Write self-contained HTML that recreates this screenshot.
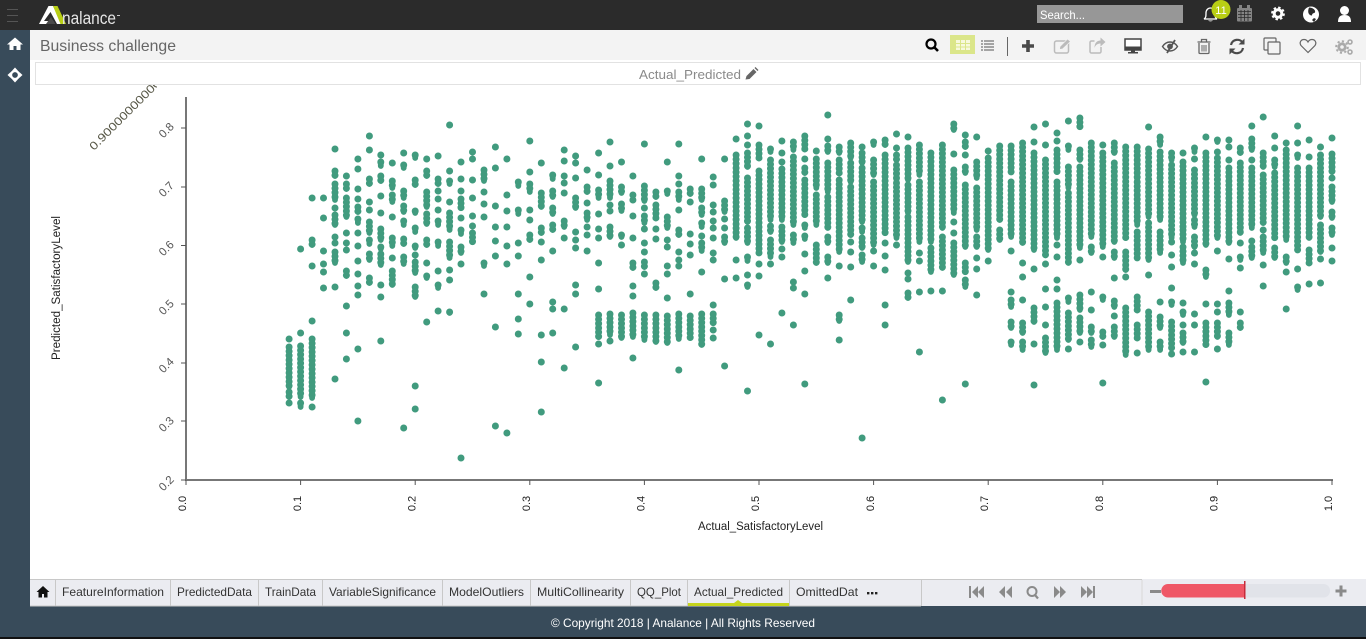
<!DOCTYPE html>
<html><head><meta charset="utf-8"><title>Analance</title>
<style>html,body{margin:0;padding:0;background:#fff;overflow:hidden}svg{display:block}text{font-family:"Liberation Sans",sans-serif}</style></head>
<body>
<svg width="1366" height="639" viewBox="0 0 1366 639" xmlns="http://www.w3.org/2000/svg">
<defs><clipPath id="c9"><rect x="60" y="85" width="97" height="90"/></clipPath>
<path id="p" d="
M289.1 339h.01M289.1 347V387M289.1 392V397M289.1 403h.01
M300.6 249h.01M300.6 333h.01M300.6 346V397M300.6 403V407
M312.1 198h.01M312.1 240V245M312.1 266h.01M312.1 321h.01M312.1 339V398M312.1 407h.01
M323.5 198h.01M323.5 218h.01M323.5 251h.01M323.5 264h.01M323.5 272h.01M323.5 288h.01
M335 149h.01M335 171V176M335 184V200M335 208h.01M335 215V225M335 237h.01M335 243h.01M335 252V263M335 287h.01M335 379h.01
M346.4 176h.01M346.4 184V189M346.4 198V217M346.4 233h.01M346.4 243h.01M346.4 250h.01M346.4 271V276M346.4 306h.01M346.4 333h.01M346.4 359h.01
M357.9 159h.01M357.9 169h.01M357.9 189h.01M357.9 199h.01M357.9 207V212M357.9 219V223M357.9 233h.01M357.9 246h.01M357.9 261h.01M357.9 274h.01M357.9 286h.01M357.9 295h.01M357.9 349h.01M357.9 421h.01
M369.4 136h.01M369.4 150h.01M369.4 179V184M369.4 202h.01M369.4 210h.01M369.4 222V233M369.4 240V244M369.4 254V260M369.4 278V283
M380.8 155h.01M380.8 162V166M380.8 176V181M380.8 196h.01M380.8 213h.01M380.8 229V240M380.8 247V249M380.8 254V265M380.8 285h.01M380.8 297h.01M380.8 341h.01
M392.3 163h.01M392.3 181V188M392.3 195V202M392.3 217h.01M392.3 238V246M392.3 258h.01M392.3 271V285
M403.7 153h.01M403.7 165V168M403.7 191V198M403.7 206V212M403.7 221V225M403.7 239V244M403.7 257V264M403.7 428h.01
M415.2 155V158M415.2 180V185M415.2 211V213M415.2 228V232M415.2 246V248M415.2 255h.01M415.2 262V273M415.2 287V297M415.2 386h.01M415.2 409h.01
M426.7 159h.01M426.7 171V176M426.7 192V207M426.7 214V224M426.7 240V245M426.7 263h.01M426.7 276V278M426.7 322h.01
M438.1 156h.01M438.1 179V184M438.1 191h.01M438.1 199h.01M438.1 210h.01M438.1 221V225M438.1 242V246M438.1 271h.01M438.1 285V288M438.1 311h.01
M449.6 125h.01M449.6 171h.01M449.6 181V184M449.6 202h.01M449.6 213V230M449.6 242V258M449.6 270h.01M449.6 280h.01M449.6 312V313
M461 162h.01M461 179h.01M461 191h.01M461 199V208M461 218h.01M461 230V234M461 247V253M461 264h.01M461 458h.01
M472.5 152h.01M472.5 159h.01M472.5 180h.01M472.5 198h.01M472.5 216h.01M472.5 226h.01M472.5 233V242
M484 170V181M484 192h.01M484 204h.01M484 217h.01M484 263V266M484 294h.01
M495.4 147h.01M495.4 168h.01M495.4 206h.01M495.4 227h.01M495.4 241h.01M495.4 256h.01M495.4 327h.01M495.4 426h.01
M506.9 159h.01M506.9 195h.01M506.9 211h.01M506.9 227h.01M506.9 246h.01M506.9 264h.01M506.9 433h.01
M518.3 182V186M518.3 210V214M518.3 243h.01M518.3 256h.01M518.3 294h.01M518.3 319h.01M518.3 334h.01
M529.8 141h.01M529.8 172h.01M529.8 184V192M529.8 210h.01M529.8 220h.01M529.8 235V240M529.8 277h.01M529.8 304h.01
M541.3 163h.01M541.3 193V207M541.3 228V233M541.3 242h.01M541.3 260h.01M541.3 335h.01M541.3 362h.01M541.3 412h.01
M552.7 175V179M552.7 191V197M552.7 208V214M552.7 225V230M552.7 251h.01M552.7 302h.01M552.7 309h.01M552.7 333h.01
M564.2 150h.01M564.2 161h.01M564.2 176h.01M564.2 183h.01M564.2 193h.01M564.2 221V227M564.2 238h.01M564.2 309h.01M564.2 368h.01
M575.6 156h.01M575.6 163h.01M575.6 178h.01M575.6 198V208M575.6 232h.01M575.6 240h.01M575.6 248h.01M575.6 285h.01M575.6 294h.01M575.6 347h.01
M587.1 170h.01M587.1 187V192M587.1 203h.01M587.1 213V220M587.1 227h.01M587.1 235h.01M587.1 251h.01
M598.6 153h.01M598.6 175h.01M598.6 190V198M598.6 214h.01M598.6 229h.01M598.6 238h.01M598.6 263h.01M598.6 289h.01M598.6 315V337M598.6 344h.01M598.6 383h.01
M610 142h.01M610 166h.01M610 181V198M610 205h.01M610 211h.01M610 227V237M610 314V335M610 341h.01
M621.5 162h.01M621.5 187V193M621.5 204V211M621.5 235V237M621.5 245h.01M621.5 315V338
M632.9 176h.01M632.9 195h.01M632.9 200h.01M632.9 216h.01M632.9 238h.01M632.9 263V268M632.9 286h.01M632.9 296h.01M632.9 313V337M632.9 358h.01
M644.4 144h.01M644.4 186V201M644.4 208h.01M644.4 216V223M644.4 229h.01M644.4 243h.01M644.4 252h.01M644.4 262V267M644.4 274h.01M644.4 315V340
M655.9 192V197M655.9 205V218M655.9 229h.01M655.9 239h.01M655.9 283V288M655.9 315V342
M667.3 162h.01M667.3 191V194M667.3 217V228M667.3 240h.01M667.3 247h.01M667.3 266h.01M667.3 274h.01M667.3 298h.01M667.3 316V343
M678.8 144h.01M678.8 176h.01M678.8 184h.01M678.8 192V200M678.8 210h.01M678.8 230V235M678.8 252h.01M678.8 260h.01M678.8 266h.01M678.8 314V339M678.8 370h.01
M690.2 189V194M690.2 202h.01M690.2 234h.01M690.2 244h.01M690.2 255h.01M690.2 294h.01M690.2 316V338
M701.7 159h.01M701.7 189V200M701.7 208V215M701.7 223V227M701.7 236h.01M701.7 243V251M701.7 272h.01M701.7 314V345
M713.2 177h.01M713.2 185h.01M713.2 205h.01M713.2 212h.01M713.2 221h.01M713.2 228h.01M713.2 238h.01M713.2 253h.01M713.2 260h.01M713.2 305h.01M713.2 314V323M713.2 330h.01M713.2 338h.01
M724.6 159h.01M724.6 201V212M724.6 219h.01M724.6 228h.01M724.6 237V243M724.6 279h.01M724.6 366h.01
M736.1 139h.01M736.1 155V238M736.1 260h.01M736.1 278h.01
M747.5 124h.01M747.5 136h.01M747.5 145h.01M747.5 153V167M747.5 178V222M747.5 228V243M747.5 257V261M747.5 275h.01M747.5 285V287M747.5 391h.01
M759 126h.01M759 145V158M759 171V253M759 264h.01M759 276h.01M759 335h.01
M770.5 149V152M770.5 160V220M770.5 226V232M770.5 240V257M770.5 264h.01M770.5 344h.01
M781.9 141h.01M781.9 153h.01M781.9 162h.01M781.9 169V220M781.9 227V242M781.9 249h.01M781.9 257h.01M781.9 313h.01
M793.4 142V150M793.4 157V225M793.4 235V243M793.4 282h.01M793.4 288h.01M793.4 325h.01
M804.8 136V149M804.8 159h.01M804.8 168V173M804.8 180V215M804.8 225V228M804.8 236V239M804.8 254h.01M804.8 271h.01M804.8 294h.01M804.8 384h.01
M816.3 151h.01M816.3 159V188M816.3 195V225M816.3 245V263
M827.8 115h.01M827.8 139h.01M827.8 146V152M827.8 163V192M827.8 197V228M827.8 237V243M827.8 257V263M827.8 278h.01
M839.2 147V153M839.2 160V173M839.2 180V252M839.2 266h.01M839.2 315V321M839.2 340h.01
M850.7 143V158M850.7 163V182M850.7 187V235M850.7 242h.01M850.7 252h.01M850.7 267h.01M850.7 300h.01
M862.1 147h.01M862.1 153V163M862.1 168V222M862.1 228V232M862.1 238V248M862.1 255V262M862.1 438h.01
M873.6 142V145M873.6 160V175M873.6 182V245M873.6 251h.01M873.6 266h.01
M885.1 140V145M885.1 155V233M885.1 243h.01M885.1 256h.01M885.1 270h.01M885.1 305h.01M885.1 325h.01
M896.5 134h.01M896.5 148h.01M896.5 155V160M896.5 165V180M896.5 183V238M896.5 245h.01
M908 137h.01M908 148V180M908 185V213M908 217V262M908 273h.01M908 279h.01M908 293V298
M919.4 145V175M919.4 182V242M919.4 253h.01M919.4 261h.01M919.4 292h.01M919.4 352h.01
M930.9 153V242M930.9 248V272M930.9 291h.01
M942.4 145V228M942.4 237V268M942.4 291h.01M942.4 400h.01
M953.8 124V130M953.8 154h.01M953.8 170V213M953.8 222h.01M953.8 233h.01M953.8 243V275
M965.3 135h.01M965.3 142V147M965.3 155h.01M965.3 167V173M965.3 185V247M965.3 263V272M965.3 280V287M965.3 384h.01
M976.7 137h.01M976.7 162V178M976.7 188V230M976.7 237V247M976.7 258h.01M976.7 269h.01M976.7 295h.01
M988.2 151h.01M988.2 158V215M988.2 218V250M988.2 261h.01
M999.7 146V220M999.7 230V240
M1011.1 146V172M1011.1 182V237M1011.1 251h.01M1011.1 292h.01M1011.1 300V307M1011.1 322V328M1011.1 342V345
M1022.6 143V243M1022.6 263h.01M1022.6 277h.01M1022.6 300h.01M1022.6 323V333M1022.6 342V350
M1034 127h.01M1034 142h.01M1034 153V250M1034 269h.01M1034 308V322M1034 344h.01M1034 385h.01
M1045.5 124h.01M1045.5 145h.01M1045.5 160V255M1045.5 264h.01M1045.5 289h.01M1045.5 307h.01M1045.5 325h.01M1045.5 338V353
M1057 133h.01M1057 141h.01M1057 150V172M1057 182V238M1057 245h.01M1057 257h.01M1057 280h.01M1057 289h.01M1057 303V350
M1068.4 121h.01M1068.4 146V150M1068.4 167V188M1068.4 193V263M1068.4 298V302M1068.4 313V340M1068.4 349h.01
M1079.9 118V127M1079.9 150V160M1079.9 167V248M1079.9 260h.01M1079.9 295V310M1079.9 318V333M1079.9 342h.01
M1091.3 143V237M1091.3 247V253M1091.3 292h.01M1091.3 310h.01M1091.3 327V333M1091.3 340V347
M1102.8 145h.01M1102.8 153V247M1102.8 257h.01M1102.8 297V300M1102.8 332V337M1102.8 345h.01M1102.8 383h.01
M1114.3 143V153M1114.3 163V242M1114.3 252V258M1114.3 278h.01M1114.3 301V307M1114.3 316h.01M1114.3 327V337
M1125.7 147V238M1125.7 252V270M1125.7 277h.01M1125.7 308V355
M1137.2 147V180M1137.2 182V225M1137.2 232V258M1137.2 297V310M1137.2 325V338M1137.2 353h.01
M1148.6 127h.01M1148.6 149V217M1148.6 223V260M1148.6 275h.01M1148.6 312V350
M1160.1 137V145M1160.1 152V220M1160.1 232V253M1160.1 302h.01M1160.1 317V328M1160.1 342V350
M1171.6 153V160M1171.6 165V238M1171.6 242h.01M1171.6 255h.01M1171.6 267h.01M1171.6 288h.01M1171.6 302V305M1171.6 322V348M1171.6 354h.01
M1183 153h.01M1183 162V228M1183 230V242M1183 247V263M1183 303h.01M1183 312V315M1183 325h.01M1183 333V343M1183 352h.01
M1194.5 148V152M1194.5 159h.01M1194.5 170V215M1194.5 220V227M1194.5 237V247M1194.5 253h.01M1194.5 264h.01M1194.5 314h.01M1194.5 325h.01M1194.5 352h.01
M1205.9 137h.01M1205.9 153V245M1205.9 270V277M1205.9 304h.01M1205.9 323V345M1205.9 382h.01
M1217.4 140V142M1217.4 152h.01M1217.4 158V238M1217.4 251h.01M1217.4 304h.01M1217.4 312h.01M1217.4 323V337M1217.4 349h.01
M1228.9 140h.01M1228.9 147h.01M1228.9 160h.01M1228.9 168V243M1228.9 259h.01M1228.9 291h.01M1228.9 303V315M1228.9 333V345
M1240.3 148V153M1240.3 163V233M1240.3 243h.01M1240.3 257V260M1240.3 268h.01M1240.3 312h.01M1240.3 323V328
M1251.8 126h.01M1251.8 139V150M1251.8 160h.01M1251.8 168V228M1251.8 241h.01M1251.8 247V258
M1263.2 117h.01M1263.2 153V167M1263.2 175V223M1263.2 230h.01M1263.2 237V253M1263.2 265h.01M1263.2 286h.01
M1274.7 136h.01M1274.7 148h.01M1274.7 160V167M1274.7 173V238M1274.7 248V258
M1286.2 143h.01M1286.2 150V240M1286.2 257V263M1286.2 272h.01M1286.2 309h.01
M1297.6 126h.01M1297.6 143h.01M1297.6 155V158M1297.6 168V250M1297.6 269h.01M1297.6 287V290
M1309.1 140h.01M1309.1 157h.01M1309.1 168V238M1309.1 250V263M1309.1 284h.01
M1320.5 147h.01M1320.5 155V217M1320.5 225V252M1320.5 259h.01M1320.5 283h.01
M1332 138h.01M1332 154V172M1332 178h.01M1332 187V202M1332 212V218M1332 228V235M1332 248h.01M1332 261h.01
"/></defs>
<rect width="1366" height="639" fill="#fff"/>
<!-- header -->
<rect width="1366" height="30" fill="#2b2b2b"/>
<path d="M7 9.5h11M7 15.5h11M7 21.5h11" stroke="#555" stroke-width="1"/>
<polygon points="39,24 48.500,6 53,6 62,24 57,24 50.500,12 44,21 50,21 48,24" fill="#fff"/>
<polygon points="46,24 51,17 55.500,24" fill="#4a4a4a"/>
<polygon points="53,6 57.500,6 66,24 60.500,24" fill="#b9cf15"/>
<text x="62" y="24" font-size="17.500" fill="#e6e6e6" textLength="54" lengthAdjust="spacingAndGlyphs">nalance</text>
<rect x="117" y="15" width="3" height="1" fill="#ccc"/>
<rect x="1037" y="5" width="146" height="18" fill="#979797"/>
<text x="1040" y="19" font-size="12" fill="#fff" textLength="45" lengthAdjust="spacingAndGlyphs">Search...</text>
<path d="M1204 19c2-1 2-3 2-6 0-3 2-5 4.500-5s4.500 2 4.500 5c0 3 0 5 2 6z" fill="none" stroke="#fff" stroke-width="1.300"/>
<path d="M1208 20.500a3 2 0 0 0 5 0z" fill="#fff"/>
<circle cx="1221" cy="9.500" r="9.500" fill="#b9cf15"/>
<text x="1221" y="14" font-size="11" fill="#fff" text-anchor="middle">11</text>
<rect x="1237" y="8" width="15" height="13.500" rx="1" fill="#848484"/>
<rect x="1239" y="5" width="3" height="4" fill="#848484"/><rect x="1247" y="5" width="3" height="4" fill="#848484"/>
<path d="M1238 11.500h13M1238 14.500h13M1238 17.500h13M1241 10v11M1244.500 10v11M1248 10v11" stroke="#2b2b2b" stroke-width=".8"/>
<circle cx="1278" cy="13.500" r="3.800" fill="none" stroke="#fff" stroke-width="3"/>
<circle cx="1278" cy="13.500" r="6" fill="none" stroke="#fff" stroke-width="1.800" stroke-dasharray="2.500 2.200"/>
<circle cx="1311" cy="14.500" r="8" fill="#fff"/>
<path d="M1309 7.500c3 0 7 2 6 5-2 1-3 1-3 3-3 0-5-3-3-8zM1312 20l2-2 2 1-2 3z" fill="#2b2b2b"/>
<circle cx="1344.500" cy="10.500" r="4.500" fill="#fff"/><path d="M1338 22c0-5 2-7 6.500-7s6.500 2 6.500 7z" fill="#fff"/>
<!-- sidebar / footer -->
<rect y="30" width="30" height="609" fill="#384b5a"/>
<rect y="606" width="1366" height="31" fill="#384b5a"/>
<rect y="637" width="1366" height="2" fill="#111"/>
<path d="M15 37.500l-8 7h2.500v5.500h4v-4h3v4h4v-5.500h2.500z" fill="#fff"/>
<circle cx="15" cy="75" r="4" fill="none" stroke="#fff" stroke-width="2.300"/>
<path d="M15 67.500l3 3.200h-6zM15 82.500l3-3.200h-6zM7.500 75l3.200-3v6zM22.500 75l-3.200-3v6z" fill="#fff"/>
<text x="683" y="627" font-size="12" fill="#fff" text-anchor="middle" textLength="264" lengthAdjust="spacingAndGlyphs">© Copyright 2018 | Analance | All Rights Reserved</text>
<!-- title bar -->
<rect x="30" y="30" width="1336" height="30" fill="#f3f3f3"/>
<text x="40" y="51" font-size="16" fill="#666" textLength="136" lengthAdjust="spacingAndGlyphs">Business challenge</text>
<circle cx="931" cy="44" r="4.500" fill="none" stroke="#000" stroke-width="2.200"/><path d="M934.500 47.500l3.500 3.500" stroke="#000" stroke-width="2.600"/>
<rect x="950" y="35" width="25" height="19" fill="#dbe68a"/>
<path d="M956 40h4v3h-4zM961 40h4v3h-4zM966 40h4v3h-4zM956 44h4v2.500h-4zM961 44h4v2.500h-4zM966 44h4v2.500h-4zM956 47.500h4v2.500h-4zM961 47.500h4v2.500h-4zM966 47.500h4v2.500h-4z" fill="#f7f9dc"/>
<path d="M981 41h2M984 41h10M981 44h2M984 44h10M981 47h2M984 47h10M981 50h2M984 50h10" stroke="#8a8a8a" stroke-width="1.500"/>
<path d="M1007.500 37v19" stroke="#666" stroke-width="1"/>
<path d="M1028 40v12M1022 46h12" stroke="#4a4a4a" stroke-width="3.600"/>
<rect x="1054.500" y="41" width="14" height="12" rx="2" fill="none" stroke="#bbb" stroke-width="1.500"/>
<path d="M1059.500 49.500l.5-3 7.500-7.500 3 2.500-8 7.500z" fill="#bbb" stroke="#f3f3f3" stroke-width=".7"/>
<path d="M1101 47v4.500a1.500 1.500 0 0 1-1.500 1.500h-8a1.500 1.500 0 0 1-1.500-1.500v-9a1.500 1.500 0 0 1 1.500-1.500h3" fill="none" stroke="#bbb" stroke-width="1.500"/>
<path d="M1094.500 48c0-5 2.500-7.500 6-7.500v-3l5 4.500-5 4.500v-3c-2.500 0-5 1-6 4.500z" fill="#bbb"/>
<rect x="1125" y="39" width="16" height="11" fill="#fff" stroke="#444" stroke-width="1.500"/>
<path d="M1125 46.500h16v4h-16zM1131 50h4v2h3v1.500h-10v-1.500h3z" fill="#444"/>
<g fill="none" stroke="#555" stroke-width="1.400"><path d="M1162.500 46.500c4-6 11-6 15 0-4 6-11 6-15 0z"/><circle cx="1170" cy="46.500" r="2.200" fill="#555"/><path d="M1175 40l-8 13" stroke-width="1.800"/></g>
<g fill="none" stroke="#666" stroke-width="1.300"><path d="M1199 43v9.500a1 1 0 0 0 1 1h8a1 1 0 0 0 1-1V43M1197.500 42h13M1201.500 41.500v-2h5v2"/><path d="M1202 45v6.500M1204 45v6.500M1206 45v6.500" stroke="#888"/></g>
<g fill="none" stroke="#4a4a4a" stroke-width="2.200"><path d="M1231 45c1-6 9-7 12-2"/><path d="M1243 48c-1 6-9 7-12 2"/></g>
<path d="M1244.500 38.500v6h-6zM1229.500 54.500v-6h6z" fill="#4a4a4a"/>
<g fill="none" stroke="#666" stroke-width="1.200"><path d="M1268 50h-3a1 1 0 0 1-1-1v-10a1 1 0 0 1 1-1h10a1 1 0 0 1 1 1v3"/><rect x="1268" y="42" width="12" height="12" rx="1" fill="#f3f3f3"/></g>
<path d="M1308 52.500l-7-7c-2-3 0-6 3-6 2 0 3.200 1 4 2.500.8-1.500 2-2.500 4-2.500 3 0 5 3 3 6z" fill="none" stroke="#666" stroke-width="1.200"/>
<g fill="none" stroke="#aaa"><circle cx="1342" cy="47" r="3.200" stroke-width="2.800"/><circle cx="1342" cy="47" r="5.800" stroke-width="2" stroke-dasharray="2.200 2.300"/><circle cx="1350" cy="42" r="2" stroke-width="1.600"/><circle cx="1350" cy="52" r="2" stroke-width="1.600"/></g>
<!-- sub title -->
<rect x="35.500" y="62.500" width="1325" height="22" fill="#fff" stroke="#e2e2e2"/>
<text x="639" y="79" font-size="13" fill="#8a8a8a" textLength="102" lengthAdjust="spacingAndGlyphs">Actual_Predicted</text>
<path d="M745.500 79.500l1-3.500 7-7 3 3-7 7zM754.500 68l1-1 3 3-1 1z" fill="#666"/>
<!-- axes -->
<path d="M186 97V481M185 480H1333" stroke="#777" stroke-width="2" fill="none"/>
<path d="M181 128h5M181 187h5M181 245.500h5M181 304h5M181 363h5M181 421h5M181 480h5" stroke="#555" stroke-width="1"/>
<path d="M186 480v5M300.600 480v5M415.200 480v5M529.800 480v5M644.400 480v5M759 480v5M873.600 480v5M988.200 480v5M1102.800 480v5M1217.400 480v5M1332 480v5" stroke="#555" stroke-width="1"/>
<g font-size="11.500" fill="#555" text-anchor="middle">
<text transform="translate(169,133) rotate(-45)">0.8</text>
<text transform="translate(169,192) rotate(-45)">0.7</text>
<text transform="translate(169,251) rotate(-45)">0.6</text>
<text transform="translate(169,310) rotate(-45)">0.5</text>
<text transform="translate(169,368) rotate(-45)">0.4</text>
<text transform="translate(169,427) rotate(-45)">0.3</text>
<text transform="translate(169,486) rotate(-45)">0.2</text>
</g>
<g clip-path="url(#c9)"><text transform="translate(94,151) rotate(-45)" font-size="11.500" fill="#554" textLength="118" lengthAdjust="spacingAndGlyphs">0.90000000000001</text></g>
<g font-size="11" fill="#222" text-anchor="middle">
<text transform="translate(186,503.500) rotate(-90)">0.0</text>
<text transform="translate(301,503.500) rotate(-90)">0.1</text>
<text transform="translate(415.500,503.500) rotate(-90)">0.2</text>
<text transform="translate(530,503.500) rotate(-90)">0.3</text>
<text transform="translate(644.500,503.500) rotate(-90)">0.4</text>
<text transform="translate(759,503.500) rotate(-90)">0.5</text>
<text transform="translate(874,503.500) rotate(-90)">0.6</text>
<text transform="translate(988,503.500) rotate(-90)">0.7</text>
<text transform="translate(1103,503.500) rotate(-90)">0.8</text>
<text transform="translate(1217.500,503.500) rotate(-90)">0.9</text>
<text transform="translate(1332,503.500) rotate(-90)">1.0</text>
</g>
<text x="698" y="530" font-size="11.500" fill="#222" textLength="125" lengthAdjust="spacingAndGlyphs">Actual_SatisfactoryLevel</text>
<text transform="translate(60,360) rotate(-90)" font-size="11.500" fill="#222" textLength="144" lengthAdjust="spacingAndGlyphs">Predicted_SatisfactoryLevel</text>
<!-- scatter: scalloped dots + solid core -->
<use href="#p" fill="none" stroke="#419b7e" stroke-width="7" stroke-linecap="round" stroke-dasharray=".01 4.300"/>
<use href="#p" fill="none" stroke="#419b7e" stroke-width="5.800" stroke-linecap="round"/>
<!-- tabs -->
<rect x="30" y="579" width="1336" height="27" fill="#ebecf1"/>
<path d="M30 579.500H1142M30 606H921" stroke="#c8c8c8" stroke-width="1" fill="none"/>
<path d="M55.500 580v26M170.500 580v26M258.500 580v26M322.500 580v26M442.500 580v26M530.500 580v26M630.500 580v26M687.500 580v26M789.500 580v26M921.500 580v26" stroke="#c8c8c8" stroke-width="1"/>
<path d="M1142 580v25" stroke="#d8d8d8" stroke-width="1"/>
<path d="M43 586l-6.500 6h2v5.500h3.500v-3.500h2v3.500h3.500v-5.500h2z" fill="#111"/>
<g font-size="12" fill="#333">
<text x="62" y="596" textLength="102" lengthAdjust="spacingAndGlyphs">FeatureInformation</text>
<text x="177" y="596" textLength="75" lengthAdjust="spacingAndGlyphs">PredictedData</text>
<text x="265" y="596" textLength="51" lengthAdjust="spacingAndGlyphs">TrainData</text>
<text x="329" y="596" textLength="107" lengthAdjust="spacingAndGlyphs">VariableSignificance</text>
<text x="449" y="596" textLength="75" lengthAdjust="spacingAndGlyphs">ModelOutliers</text>
<text x="537" y="596" textLength="87" lengthAdjust="spacingAndGlyphs">MultiCollinearity</text>
<text x="637" y="596" textLength="44" lengthAdjust="spacingAndGlyphs">QQ_Plot</text>
<text x="694" y="596" textLength="89" lengthAdjust="spacingAndGlyphs">Actual_Predicted</text>
<text x="796" y="596" textLength="62" lengthAdjust="spacingAndGlyphs">OmittedDat</text>
</g>
<path d="M867 592h2.400v2.400h-2.400zM871 592h2.400v2.400h-2.400zM875 592h2.400v2.400h-2.400z" fill="#222"/>
<rect x="688" y="603" width="101" height="3" fill="#c5d41c"/>
<path d="M734 603l4-3 4 3z" fill="#c5d41c"/>
<!-- pager -->
<g fill="#8a8a8a">
<path d="M969 586h2v12h-2zM978 586v12l-6-6zM984 586v12l-6-6z"/>
<path d="M1005 586v12l-6-6zM1012 586v12l-6-6z"/>
<path d="M1054 586v12l6-6zM1060 586v12l6-6z"/>
<path d="M1081 586v12l6-6zM1087 586v12l6-6zM1093 586h2v12h-2z"/>
</g>
<circle cx="1032" cy="591.500" r="4.500" fill="none" stroke="#8a8a8a" stroke-width="2"/><path d="M1035 595l3 3.500" stroke="#8a8a8a" stroke-width="2.200"/>
<!-- slider -->
<rect x="1150" y="590" width="11" height="3" fill="#8a8a8a"/>
<rect x="1162" y="584" width="168" height="13.500" rx="6.500" fill="#e1e3e9"/>
<path d="M1168 584h77v13.500h-77a6.700 6.700 0 0 1 0-13.500z" fill="#ef5766"/>
<rect x="1244" y="581" width="1.500" height="18" fill="#c72b3b"/>
<path d="M1341 585.500v11M1335.500 591h11" stroke="#8a8a8a" stroke-width="3"/>
</svg>
</body></html>
